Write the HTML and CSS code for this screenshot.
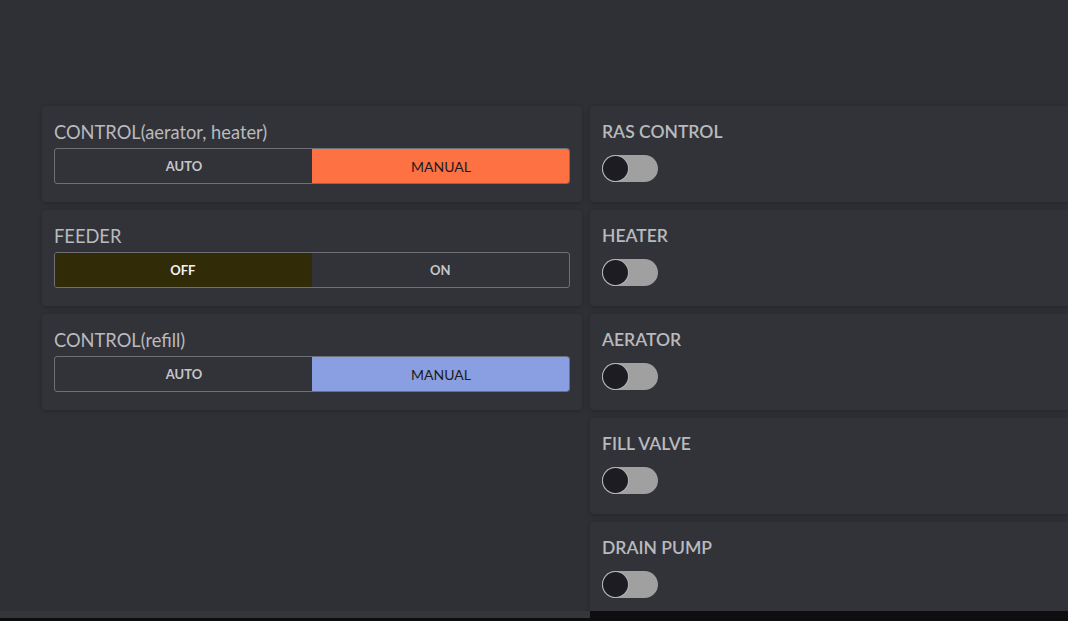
FILE: index.html
```html
<!DOCTYPE html>
<html lang="en">
<head>
    <meta charset="UTF-8">
    <title>Controls</title>
    <link rel="stylesheet" href="styles.css">
</head>
<body>
    <div id="main">
        <div class="col">
            <div class="card">
                <div class="label">CONTROL(aerator, heater)</div>
                <div class="seg">
                    <div class="opt">AUTO</div>
                    <div class="opt sel orange">MANUAL</div>
                </div>
            </div>
            <div class="card">
                <div class="label">FEEDER</div>
                <div class="seg plain">
                    <div class="opt sel olive">OFF</div>
                    <div class="opt">ON</div>
                </div>
            </div>
            <div class="card">
                <div class="label">CONTROL(refill)</div>
                <div class="seg">
                    <div class="opt">AUTO</div>
                    <div class="opt sel blue">MANUAL</div>
                </div>
            </div>
        </div>
        <div class="col">
            <div class="card">
                <div class="label bold">RAS CONTROL</div>
                <div class="switch"><span class="knob"></span></div>
            </div>
            <div class="card">
                <div class="label bold">HEATER</div>
                <div class="switch"><span class="knob"></span></div>
            </div>
            <div class="card">
                <div class="label bold">AERATOR</div>
                <div class="switch"><span class="knob"></span></div>
            </div>
            <div class="card">
                <div class="label bold">FILL VALVE</div>
                <div class="switch"><span class="knob"></span></div>
            </div>
            <div class="card">
                <div class="label bold">DRAIN PUMP</div>
                <div class="switch"><span class="knob"></span></div>
            </div>
        </div>
    </div>
    <div id="foot"><div class="strip"></div></div>
</body>
</html>
```
FILE: styles.css
```css
* {
    margin: 0;
    padding: 0;
    box-sizing: border-box;
}
html, body {
    width: 1068px;
    height: 621px;
    overflow: hidden;
    background-color: #2f3036;
    font-family: Lato, "Open Sans", sans-serif;
}
#main {
    height: 611px;
    overflow: hidden;
    padding: 106px 0 0 42px;
    display: flex;
    align-items: flex-start;
    gap: 8px;
}
.col {
    display: flex;
    flex-direction: column;
    gap: 8px;
    width: 540px;
    flex-shrink: 0;
}
.card {
    height: 96px;
    flex-shrink: 0;
    background-color: #323339;
    border-radius: 4px;
    box-shadow: 0 1px 4px rgba(0, 0, 0, 0.25);
    padding: 15px 12px 14px;
}
.label {
    font-size: 18.3px;
    line-height: 22px;
    color: #b9babe;
    margin-bottom: 5px;
}
.label.bold {
    font-size: 17.5px;
    font-weight: 600;
    margin-bottom: 12px;
}
.seg {
    display: flex;
    height: 36px;
    border: 1px solid #6f7075;
    border-radius: 3px;
    overflow: hidden;
}
.opt {
    flex: 1;
    display: flex;
    justify-content: center;
    align-items: center;
    font-size: 13px;
    font-weight: 700;
    color: #c6c6c9;
}
.opt.sel {
    font-weight: 400;
    font-size: 14px;
    color: #1b1b20;
    margin: -1px -1px -1px -1px;
}
.orange { background-color: #fe7142; }
.blue { background-color: #8a9fe1; }
.seg.plain .opt.olive {
    background-color: #322b07;
    color: #f2f2f2;
    font-weight: 700;
    font-size: 13px;
    margin: -1px 0 -1px -1px;
}
.switch {
    width: 56px;
    height: 27px;
    border-radius: 14px;
    background-color: #a0a0a0;
    padding: 1px;
}
.knob {
    display: block;
    width: 25px;
    height: 25px;
    border-radius: 50%;
    background-color: #1d1c23;
    box-shadow: 0 0 0 1px #b4b4b4;
}
#foot {
    height: 10px;
    background-color: #0e0e10;
}
#foot .strip {
    width: 590px;
    height: 7px;
    background-color: #35363b;
}
```
